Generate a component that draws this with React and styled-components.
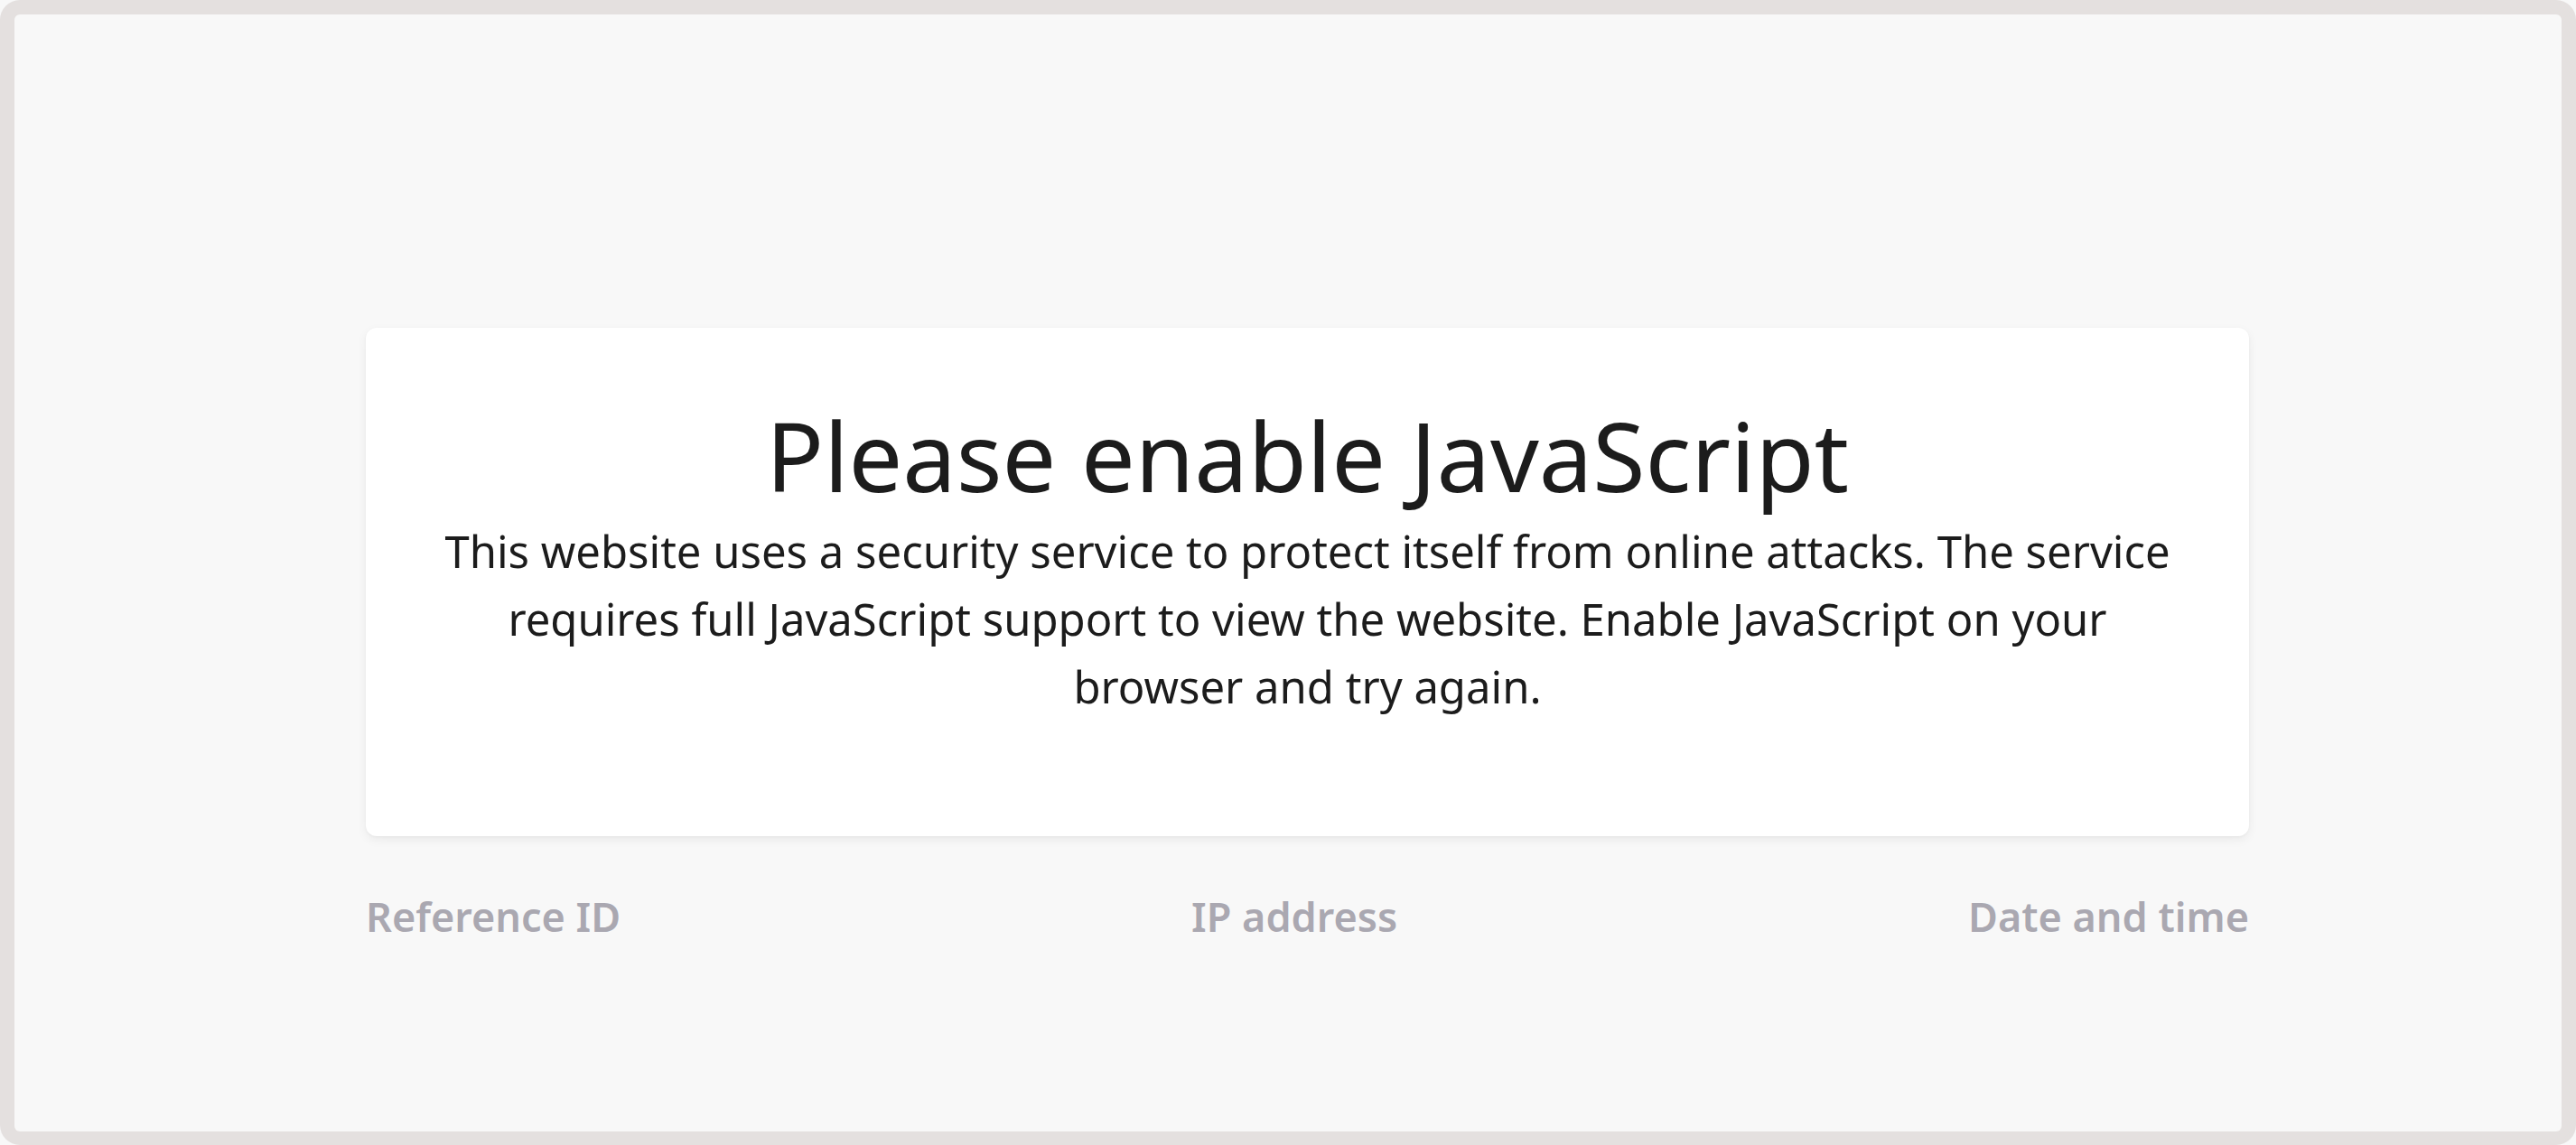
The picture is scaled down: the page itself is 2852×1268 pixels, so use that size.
import React from 'react';
import styled, { createGlobalStyle } from 'styled-components';

const GlobalStyle = createGlobalStyle`
  html, body {
    margin: 0;
    padding: 0;
    background: #f8f8f8;
  }
  body {
    font-family: "Noto Sans", "Open Sans", sans-serif;
  }
`;

const Frame = styled.div`
  box-sizing: border-box;
  width: 2852px;
  height: 1268px;
  padding: 16px 16px 15px 16px;
  background: #e4e0df;
  border-radius: 22px;
  display: flex;
`;

const Page = styled.main`
  flex: 1;
  background: #f8f8f8;
  border-radius: 6px;
  padding: 347px 346px 0 389px;
  display: flex;
  flex-direction: column;
`;

const Card = styled.section`
  box-sizing: border-box;
  height: 563px;
  background: #ffffff;
  border-radius: 12px;
  box-shadow: 0 4px 12px rgba(0, 0, 0, 0.06), 0 1px 3px rgba(0, 0, 0, 0.04);
  padding: 78px 78px 0;
  text-align: center;
  color: #1c1c1c;
`;

const Title = styled.h1`
  margin: 0;
  font-size: 106px;
  font-weight: 400;
  line-height: 1.2;
`;

const Message = styled.p`
  margin: 5px 0 0;
  font-size: 49px;
  line-height: 75px;
`;

const Details = styled.footer`
  display: flex;
  justify-content: space-between;
  margin-top: 58px;
`;

const Label = styled.span`
  font-size: 45px;
  font-weight: 600;
  color: #aaa8b1;
`;

export default function App() {
  return (
    <>
      <GlobalStyle />
      <Frame>
        <Page>
          <Card>
            <Title>Please enable JavaScript</Title>
            <Message>
              This website uses a security service to protect itself from online attacks. The service
              requires full JavaScript support to view the website. Enable JavaScript on your
              browser and try again.
            </Message>
          </Card>
          <Details>
            <Label>Reference ID</Label>
            <Label>IP address</Label>
            <Label>Date and time</Label>
          </Details>
        </Page>
      </Frame>
    </>
  );
}
